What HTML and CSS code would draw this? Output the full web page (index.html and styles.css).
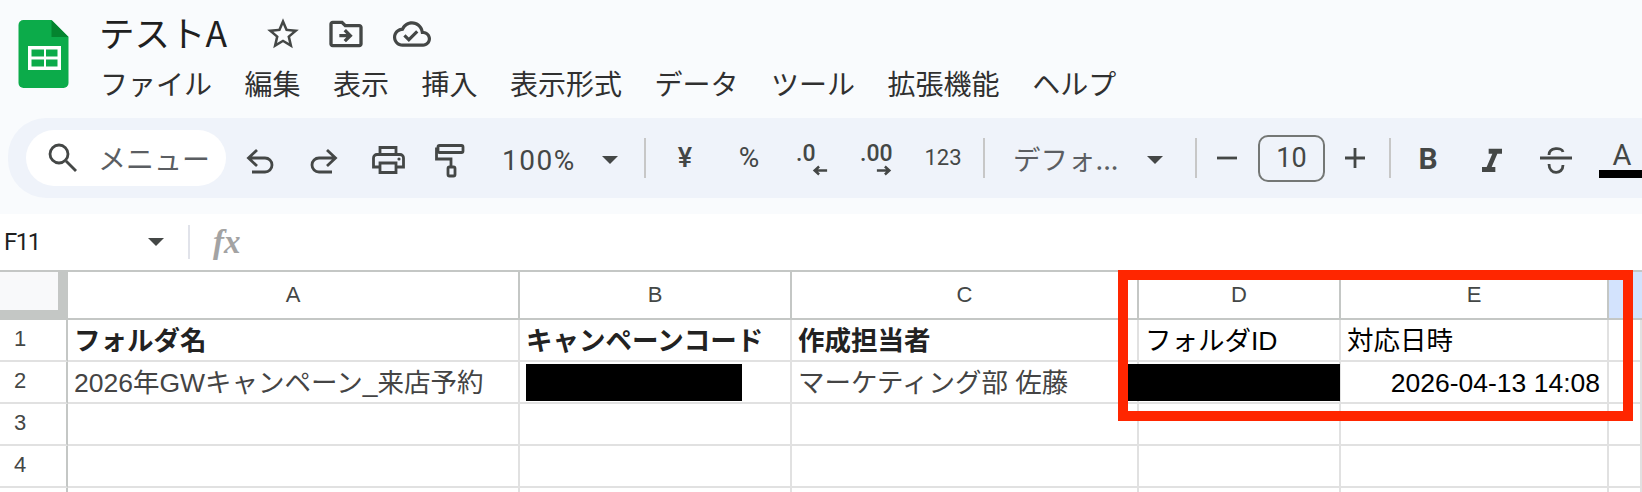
FILE: index.html
```html
<!DOCTYPE html>
<html lang="ja">
<head>
<meta charset="utf-8">
<title>テストA</title>
<link rel="stylesheet" href="styles.css">
</head>
<body>
<header class="head">
  <svg class="logo" viewBox="0 0 50 68"><path d="M5 0H33L50 17V63a5 5 0 0 1-5 5H5a5 5 0 0 1-5-5V5a5 5 0 0 1 5-5z" fill="#0cab4a"/><path d="M33 0L50 17H33z" fill="#04842f"/><rect x="9.5" y="26" width="33" height="24" fill="#fff"/><rect x="13" y="29.5" width="12.5" height="7" fill="#0cab4a"/><rect x="27.5" y="29.5" width="11.5" height="7" fill="#0cab4a"/><rect x="13" y="39.5" width="12.5" height="7" fill="#0cab4a"/><rect x="27.5" y="39.5" width="11.5" height="7" fill="#0cab4a"/></svg>
  <div class="head-main">
    <div class="title-row">
      <span class="title">テストA</span>
      <svg class="ic-star" viewBox="0 0 24 24"><path d="M22 9.24l-7.19-.62L12 2 9.19 8.63 2 9.24l5.46 4.73L5.82 21 12 17.27 18.18 21l-1.63-7.03L22 9.24zM12 15.4l-3.76 2.27 1-4.28-3.32-2.88 4.38-.38L12 6.1l1.71 4.04 4.38.38-3.32 2.88 1 4.28L12 15.4z"/></svg>
      <svg class="ic-folder" viewBox="0 0 24 24"><path d="M20 6h-8l-2-2H4c-1.1 0-2 .9-2 2v12c0 1.1.9 2 2 2h16c1.1 0 2-.9 2-2V8c0-1.1-.9-2-2-2zm0 12H4V6h5.17l2 2H20v10zM12.16 12H8v2h4.16l-1.59 1.59L11.99 17 16 13.01 11.99 9l-1.42 1.41L12.16 12z"/></svg>
      <svg class="ic-cloud" viewBox="0 0 24 24"><path d="M19.35 10.04C18.67 6.59 15.64 4 12 4 9.11 4 6.6 5.64 5.35 8.04 2.34 8.36 0 10.91 0 14c0 3.31 2.69 6 6 6h13c2.76 0 5-2.24 5-5 0-2.64-2.05-4.78-4.65-4.96zM19 18H6c-2.21 0-4-1.79-4-4 0-2.05 1.53-3.76 3.56-3.97l1.07-.11.5-.95C8.08 7.14 9.94 6 12 6c2.62 0 4.88 1.86 5.39 4.43l.3 1.5 1.53.11c1.56.1 2.78 1.41 2.78 2.96 0 1.65-1.35 3-3 3zm-9-3.82l-2.09-2.09L6.5 13.5 10 17l6.01-6.01-1.41-1.41z"/></svg>
    </div>
    <nav class="menu">
      <span>ファイル</span><span>編集</span><span>表示</span><span>挿入</span><span>表示形式</span><span>データ</span><span>ツール</span><span>拡張機能</span><span>ヘルプ</span>
    </nav>
  </div>
</header>

<div class="toolbar">
  <div class="search">
    <svg class="ic-search" viewBox="0 0 30 30"><circle cx="11" cy="11" r="9" class="ln"/><path d="M18 18L28 28" class="ln"/></svg>
    <span>メニュー</span>
  </div>
  <svg class="slot first" viewBox="0 0 64 80"><path class="ln" d="M29 32L20.500 40L29 48M21 40H37a7 7 0 0 1 0 14H24"/></svg>
  <svg class="slot" viewBox="0 0 64 80"><path class="ln" d="M35 32L43.500 40L35 48M43 40H27a7 7 0 0 0 0 14H40"/></svg>
  <svg class="slot" viewBox="0 0 64 80"><path class="ln" d="M24 37V29.500H40V37M24 49H17.500V40a3.500 3.500 0 0 1 3.500-3.500H44a3.500 3.500 0 0 1 3.500 3.500V49H40M24 45H40V54.500H24z"/><circle cx="43" cy="41" r="1.600" class="dot"/></svg>
  <svg class="slot" viewBox="0 0 64 80"><rect class="ln" x="18" y="27.500" width="25" height="7" rx="1.500"/><path class="ln" d="M18 31H16.500V41H31V49"/><rect class="ln" x="28" y="49" width="7" height="9" rx="1.500"/></svg>
  <div class="zoom"><span>100%</span><i class="arrow"></i></div>
  <i class="sep sep-a"></i>
  <span class="tool yen">¥</span>
  <span class="tool pct">%</span>
  <span class="tool dec">.0<svg class="dec-arrow" viewBox="0 0 18 12"><path class="ln" d="M17 6H3M8 1.500L3 6L8 10.500"/></svg></span>
  <span class="tool dec">.00<svg class="dec-arrow" viewBox="0 0 18 12"><path class="ln" d="M1 6H15M10 1.500L15 6L10 10.500"/></svg></span>
  <span class="tool num">123</span>
  <i class="sep sep-b"></i>
  <div class="font"><span>デフォ...</span><i class="arrow"></i></div>
  <i class="sep sep-c"></i>
  <svg class="pm" viewBox="0 0 20 20"><path class="ln" d="M0 10H20"/></svg>
  <span class="size">10</span>
  <svg class="pm" viewBox="0 0 20 20"><path class="ln" d="M0 10H20M10 0V20"/></svg>
  <i class="sep sep-d"></i>
  <span class="fmt bold">B</span>
  <svg class="ic-ital" viewBox="0 0 24 24"><path d="M10 4v3h2.210l-3.420 8H6v3h8v-3h-2.210l3.420-8H18V4z"/></svg>
  <svg class="slot" viewBox="0 0 64 80"><path class="ln" d="M16 40H48M25 37c0-8 13-8 14-3M25 46c0 11 14 11 14 1"/></svg>
  <div class="color"><span>A</span><i></i></div>
</div>

<div class="formula">
  <span class="ref">F11</span>
  <i class="arrow"></i>
  <i class="fsep"></i>
  <span class="fx">fx</span>
</div>

<main class="grid">
  <div class="corner"><i></i></div>
  <div class="ch">A</div><div class="ch">B</div><div class="ch">C</div><div class="ch">D</div><div class="ch">E</div><div class="ch sel"></div>

  <div class="rh">1</div>
  <div class="c b">フォルダ名</div><div class="c b">キャンペーンコード</div><div class="c b">作成担当者</div><div class="c k">フォルダID</div><div class="c k">対応日時</div><div class="c"></div>

  <div class="rh">2</div>
  <div class="c">2026年GWキャンペーン_来店予約</div><div class="c"></div><div class="c">マーケティング部 佐藤</div><div class="c"></div><div class="c k right">2026-04-13 14:08</div><div class="c"></div>

  <div class="rh">3</div>
  <div class="c"></div><div class="c"></div><div class="c"></div><div class="c"></div><div class="c"></div><div class="c"></div>

  <div class="rh">4</div>
  <div class="c"></div><div class="c"></div><div class="c"></div><div class="c"></div><div class="c"></div><div class="c"></div>

  <div class="rh last"></div>
  <div class="c last"></div><div class="c last"></div><div class="c last"></div><div class="c last"></div><div class="c last"></div><div class="c last"></div>

  <i class="redact redact-b"></i>
  <i class="redact redact-d"></i>
  <i class="mark"></i>
</main>
</body>
</html>
```
FILE: styles.css
```css
* { box-sizing: border-box; }
html, body { margin: 0; padding: 0; height: 492px; overflow: hidden; }
body {
  width: 1642px;
  background: #fff;
  color: #1f1f1f;
  font-family: "Liberation Sans", "Noto Sans CJK JP", sans-serif;
}
svg { display: block; flex: none; fill: #444746; }
i { display: block; font-style: normal; }

.ln { fill: none; stroke: #444746; stroke-width: 2.8; }
.dot { fill: #444746; }

.head {
  display: flex;
  height: 118px;
  padding: 20px 0 0 18px;
  background: #f9fbfd;
}
.logo { width: 51px; height: 68px; }
.head-main { margin: -8px 0 0 30px; }
.title-row { display: flex; align-items: center; height: 40px; }
.title-row svg { margin-top: 3px; }
.title {
  font: 35.5px/40px "Noto Sans CJK JP", sans-serif;
  color: #1f1f1f;
}
.ic-star { width: 38px; height: 38px; margin-left: 37px; }
.ic-folder { width: 40px; height: 40px; margin-left: 23.5px; }
.ic-cloud { width: 38px; height: 38px; margin-left: 27px; }
.menu {
  display: flex;
  gap: 32.5px;
  margin: 11px 0 0 1px;
  font: 28px/40px "Noto Sans CJK JP", sans-serif;
  color: #303030;
}

.toolbar {
  display: flex;
  align-items: center;
  position: relative;
  height: 96px;
  padding: 0 0 16px 26px;
  background: #f9fbfd;
  overflow: hidden;
}
.toolbar::before {
  content: "";
  position: absolute;
  left: 8px;
  top: 0;
  right: -60px;
  height: 80px;
  border-radius: 38px;
  background: #eff3fa;
}
.toolbar > * { position: relative; flex: none; }
.search {
  display: flex;
  align-items: center;
  width: 200px;
  height: 56px;
  padding-left: 22px;
  border-radius: 28px;
  background: #fff;
  font: 28px/56px "Noto Sans CJK JP", sans-serif;
  color: #5b5e62;
  white-space: nowrap;
}
.ic-search { width: 30px; height: 30px; margin-right: 20px; }
.slot { width: 64px; height: 80px; }
.first { margin-left: 2px; }
.zoom {
  display: flex;
  align-items: center;
  width: 160px;
  padding-left: 18px;
  font: 28px/40px Roboto, sans-serif;
  letter-spacing: 1.5px;
  color: #444746;
}
.zoom span { width: 100px; margin-top: 6px; }
.arrow {
  width: 0;
  height: 0;
  border-left: 8px solid transparent;
  border-right: 8px solid transparent;
  border-top: 8px solid #444746;
}
.zoom .arrow, .font .arrow { margin-top: 3px; }
.sep { width: 2px; height: 40px; background: #c7c7c7; }
.sep-a { margin-right: 7px; }
.sep-b { margin-right: 28px; }
.sep-c { margin: 0 20px 0 32px; }
.sep-d { margin: 0 5px 0 24px; }
.tool {
  width: 64px;
  text-align: center;
  font: 500 24px/40px Roboto, sans-serif;
  color: #444746;
}
.yen { font-size: 27px; }
.pct { font-size: 28px; font-weight: 400; }
.dec {
  margin-top: -9px;
  padding-left: 15px;
  text-align: left;
  font-size: 23px;
  line-height: 34px;
}
.dec-arrow { position: absolute; left: 31px; top: 28px; width: 16px; height: 11px; }
.num { margin: 0 8px 0 2px; font-size: 22px; font-weight: 400; }
.font {
  display: flex;
  align-items: center;
  width: 150px;
  font: 27.5px/40px "Noto Sans CJK JP", sans-serif;
  color: #5b5e62;
}
.font span { width: 134px; white-space: nowrap; }
.pm { width: 20px; height: 20px; }
.size {
  width: 67px;
  height: 47px;
  margin: 0 20px 0 21px;
  border: 2px solid #747775;
  border-radius: 10px;
  text-align: center;
  font: 27px/43px Roboto, sans-serif;
  color: #444746;
}
.fmt { width: 64px; text-align: center; color: #444746; }
.bold { margin-top: 2px; font: 700 30px/40px Roboto, sans-serif; }
.ic-ital { width: 40px; height: 40px; margin: 7px 12px 0; }
.color { width: 43px; height: 80px; margin-left: 11px; padding-top: 22px; }
.color span {
  display: block;
  width: 46px;
  text-align: center;
  font: 400 29px/30px Roboto, sans-serif;
  color: #444746;
}
.color i { height: 8px; background: #000; }

.formula {
  display: flex;
  align-items: center;
  height: 56px;
  padding-left: 4px;
  background: #fff;
}
.ref {
  width: 144px;
  font: 24px/30px Roboto, sans-serif;
  letter-spacing: -1.5px;
  color: #1f1f1f;
}
.fsep { width: 2px; height: 34px; margin-left: 24px; background: #e1e3ea; }
.fx {
  margin-left: 23px;
  font: italic 700 33px/34px "Liberation Serif", serif;
  color: #a3a3a3;
}

.grid {
  display: grid;
  position: relative;
  grid-template-columns: 68px 452px 272px 347px 202px 268px 33px;
  grid-template-rows: 48px 42px 42px 42px 42px 4px;
  border-top: 2px solid #c4c7c5;
  font-size: 26.5px;
  color: #444;
}
.corner { background: #c4c7c5; }
.corner i { width: 58px; height: 38px; background: #f8f9fa; }
.ch {
  border-right: 2px solid #c4c7c5;
  border-bottom: 2px solid #c4c7c5;
  text-align: center;
  font-size: 22px;
  line-height: 46px;
  color: #444746;
}
.sel { background: #d3e3fd; border-right: 0; }
.rh {
  width: 68px;
  padding-right: 26px;
  border-right: 2px solid #c4c7c5;
  border-bottom: 2px solid #e1e1e1;
  text-align: center;
  font-size: 22px;
  line-height: 38px;
  color: #444746;
}
.c {
  padding-left: 6px;
  border-right: 2px solid #e1e1e1;
  border-bottom: 2px solid #e1e1e1;
  line-height: 42px;
  white-space: nowrap;
}
.last { border-bottom: 0; }
.b { font-weight: 700; color: #222; }
.k { color: #000; }
.right { padding: 0 7px 0 0; text-align: right; }
.redact { position: absolute; top: 92px; height: 37px; background: #000; }
.redact-b { left: 526px; width: 216px; }
.redact-d { left: 1127px; width: 213px; }
.mark {
  position: absolute;
  left: 1118px;
  top: -2px;
  width: 515px;
  height: 151px;
  border: 10px solid #ff2600;
}
```
